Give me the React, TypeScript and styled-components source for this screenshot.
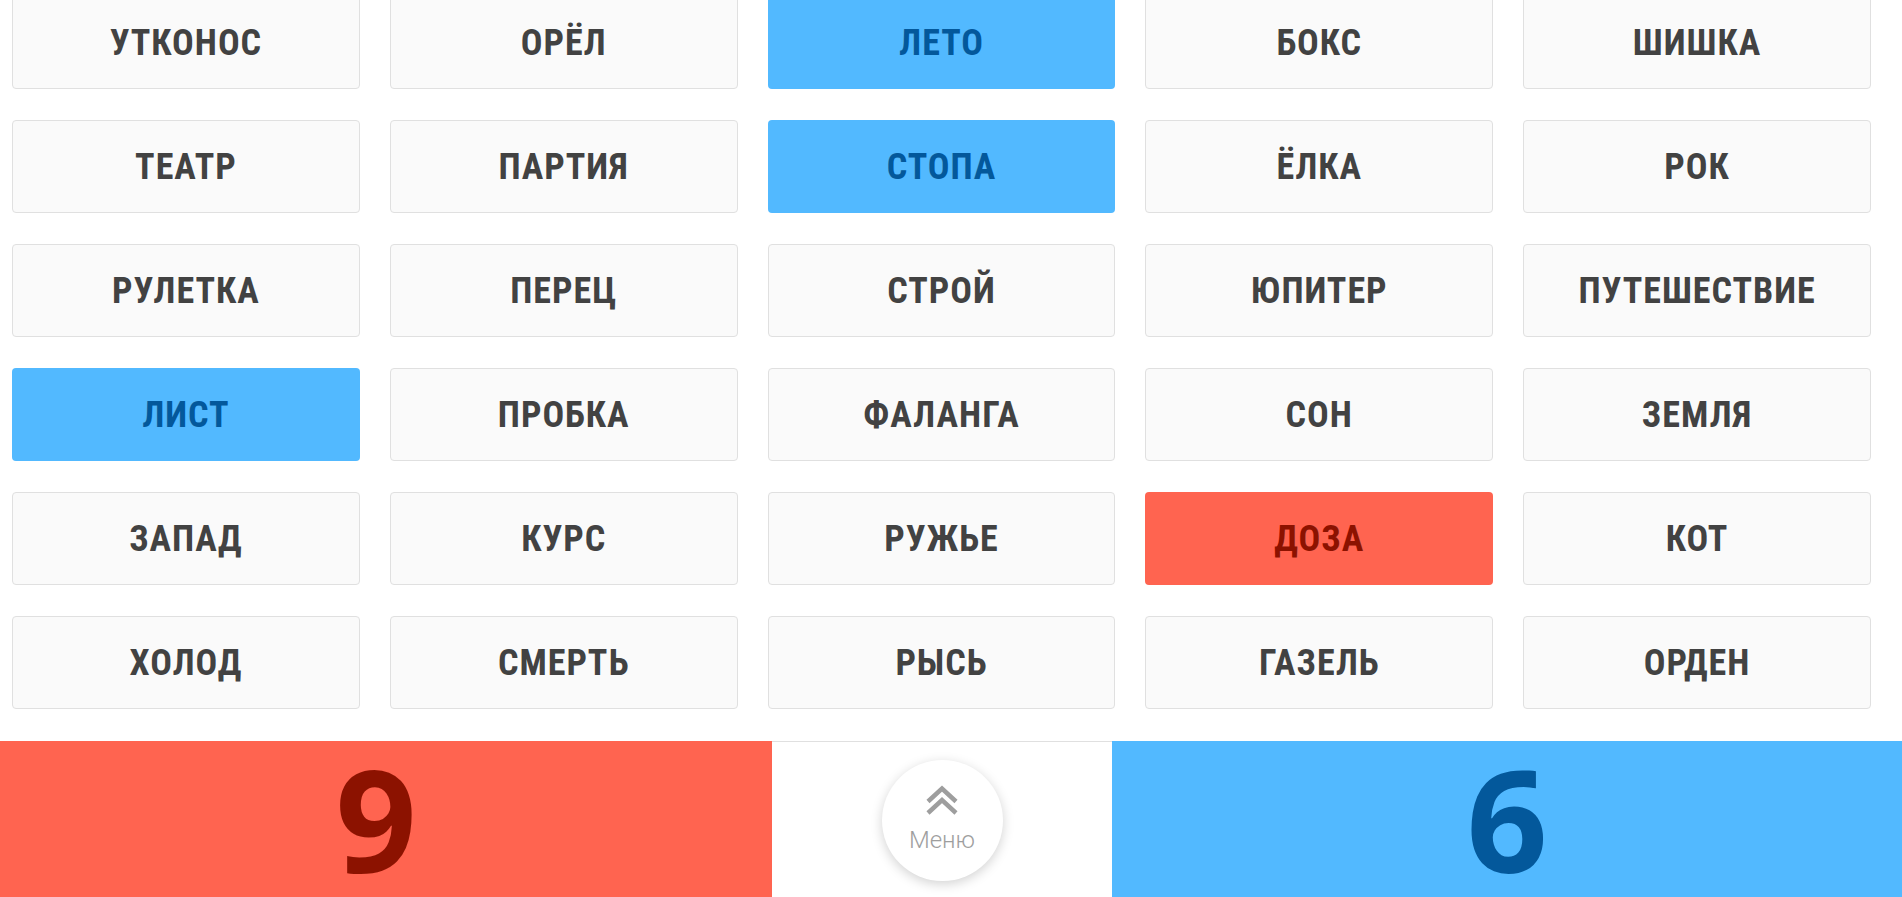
import styled, { createGlobalStyle } from 'styled-components';

type Team = 'none' | 'blue' | 'red';

interface Word {
  text: string;
  team: Team;
}

const words: Word[] = [
  { text: 'УТКОНОС', team: 'none' },
  { text: 'ОРЁЛ', team: 'none' },
  { text: 'ЛЕТО', team: 'blue' },
  { text: 'БОКС', team: 'none' },
  { text: 'ШИШКА', team: 'none' },
  { text: 'ТЕАТР', team: 'none' },
  { text: 'ПАРТИЯ', team: 'none' },
  { text: 'СТОПА', team: 'blue' },
  { text: 'ЁЛКА', team: 'none' },
  { text: 'РОК', team: 'none' },
  { text: 'РУЛЕТКА', team: 'none' },
  { text: 'ПЕРЕЦ', team: 'none' },
  { text: 'СТРОЙ', team: 'none' },
  { text: 'ЮПИТЕР', team: 'none' },
  { text: 'ПУТЕШЕСТВИЕ', team: 'none' },
  { text: 'ЛИСТ', team: 'blue' },
  { text: 'ПРОБКА', team: 'none' },
  { text: 'ФАЛАНГА', team: 'none' },
  { text: 'СОН', team: 'none' },
  { text: 'ЗЕМЛЯ', team: 'none' },
  { text: 'ЗАПАД', team: 'none' },
  { text: 'КУРС', team: 'none' },
  { text: 'РУЖЬЕ', team: 'none' },
  { text: 'ДОЗА', team: 'red' },
  { text: 'КОТ', team: 'none' },
  { text: 'ХОЛОД', team: 'none' },
  { text: 'СМЕРТЬ', team: 'none' },
  { text: 'РЫСЬ', team: 'none' },
  { text: 'ГАЗЕЛЬ', team: 'none' },
  { text: 'ОРДЕН', team: 'none' },
];

const colors = {
  red: '#ff6450',
  redText: '#8c1200',
  blue: '#52b9ff',
  blueText: '#03589b',
  card: '#fafafa',
  cardText: '#424242',
  border: '#e0e0e0',
  grey: '#9e9e9e',
};

const GlobalStyle = createGlobalStyle`
  html, body {
    margin: 0;
    padding: 0;
    background: #ffffff;
    overflow: hidden;
  }
  body {
    font-family: Roboto, 'Noto Sans', sans-serif;
  }
`;

const Page = styled.div`
  height: 100vh;
  display: flex;
  flex-direction: column;
`;

const Board = styled.div`
  flex: 1;
  min-height: 0;
  overflow: hidden;
  display: grid;
  grid-template-columns: repeat(5, 1fr);
  grid-auto-rows: 93px;
  column-gap: 30px;
  row-gap: 31px;
  align-content: end;
  padding: 0 31px 32px 12px;
`;

const Card = styled.div<{ $team: Team }>`
  display: flex;
  align-items: center;
  justify-content: center;
  border-radius: 4px;
  box-sizing: border-box;
  border: 1px solid
    ${(p) => (p.$team === 'none' ? colors.border : 'transparent')};
  background: ${(p) =>
    p.$team === 'blue' ? colors.blue : p.$team === 'red' ? colors.red : colors.card};
  color: ${(p) =>
    p.$team === 'blue'
      ? colors.blueText
      : p.$team === 'red'
        ? colors.redText
        : colors.cardText};
`;

const CardLabel = styled.span`
  font-family: Roboto, sans-serif;
  font-weight: 700;
  font-size: 36px;
  font-stretch: 75%;
  letter-spacing: 1px;
  text-transform: uppercase;
`;

const ScoreBar = styled.div`
  height: 156px;
  flex-shrink: 0;
  display: flex;
`;

const Score = styled.div<{ $team: 'red' | 'blue' }>`
  flex: ${(p) => (p.$team === 'red' ? '0 0 772px' : '1')};
  box-sizing: border-box;
  padding-right: ${(p) => (p.$team === 'red' ? '20px' : '0')};
  background: ${(p) => (p.$team === 'red' ? colors.red : colors.blue)};
  color: ${(p) => (p.$team === 'red' ? colors.redText : colors.blueText)};
  display: flex;
  justify-content: center;
  align-items: flex-start;
  font-family: 'Open Sans', sans-serif;
  font-weight: 700;
  font-size: 142px;
  line-height: 1;
  padding-top: 6px;
`;

const Middle = styled.div`
  flex: 0 0 340px;
  box-sizing: border-box;
  border-top: 1px solid ${colors.border};
  display: flex;
  justify-content: center;
  align-items: flex-start;
  padding-top: 18px;
`;

const MenuButton = styled.button`
  width: 121px;
  height: 121px;
  border-radius: 50%;
  border: none;
  background: #ffffff;
  box-shadow: 0 3px 12px rgba(0, 0, 0, 0.18);
  display: flex;
  flex-direction: column;
  align-items: center;
  padding: 25px 0 0;
  cursor: pointer;
`;

const MenuLabel = styled.span`
  font-family: Roboto, sans-serif;
  font-weight: 300;
  font-size: 24px;
  color: ${colors.grey};
  margin-top: 11px;
`;

const DoubleChevron = () => (
  <svg width="34" height="30" viewBox="0 0 34 30" fill="none">
    <polyline points="3,16.5 17,3.5 31,16.5" stroke={colors.grey} strokeWidth="4.5" />
    <polyline points="3,28 17,15 31,28" stroke={colors.grey} strokeWidth="4.5" />
  </svg>
);

export default function App() {
  return (
    <Page>
      <GlobalStyle />
      <Board>
        {words.map((w) => (
          <Card key={w.text} $team={w.team}>
            <CardLabel>{w.text}</CardLabel>
          </Card>
        ))}
      </Board>
      <ScoreBar>
        <Score $team="red">9</Score>
        <Middle>
          <MenuButton>
            <DoubleChevron />
            <MenuLabel>Меню</MenuLabel>
          </MenuButton>
        </Middle>
        <Score $team="blue">6</Score>
      </ScoreBar>
    </Page>
  );
}
